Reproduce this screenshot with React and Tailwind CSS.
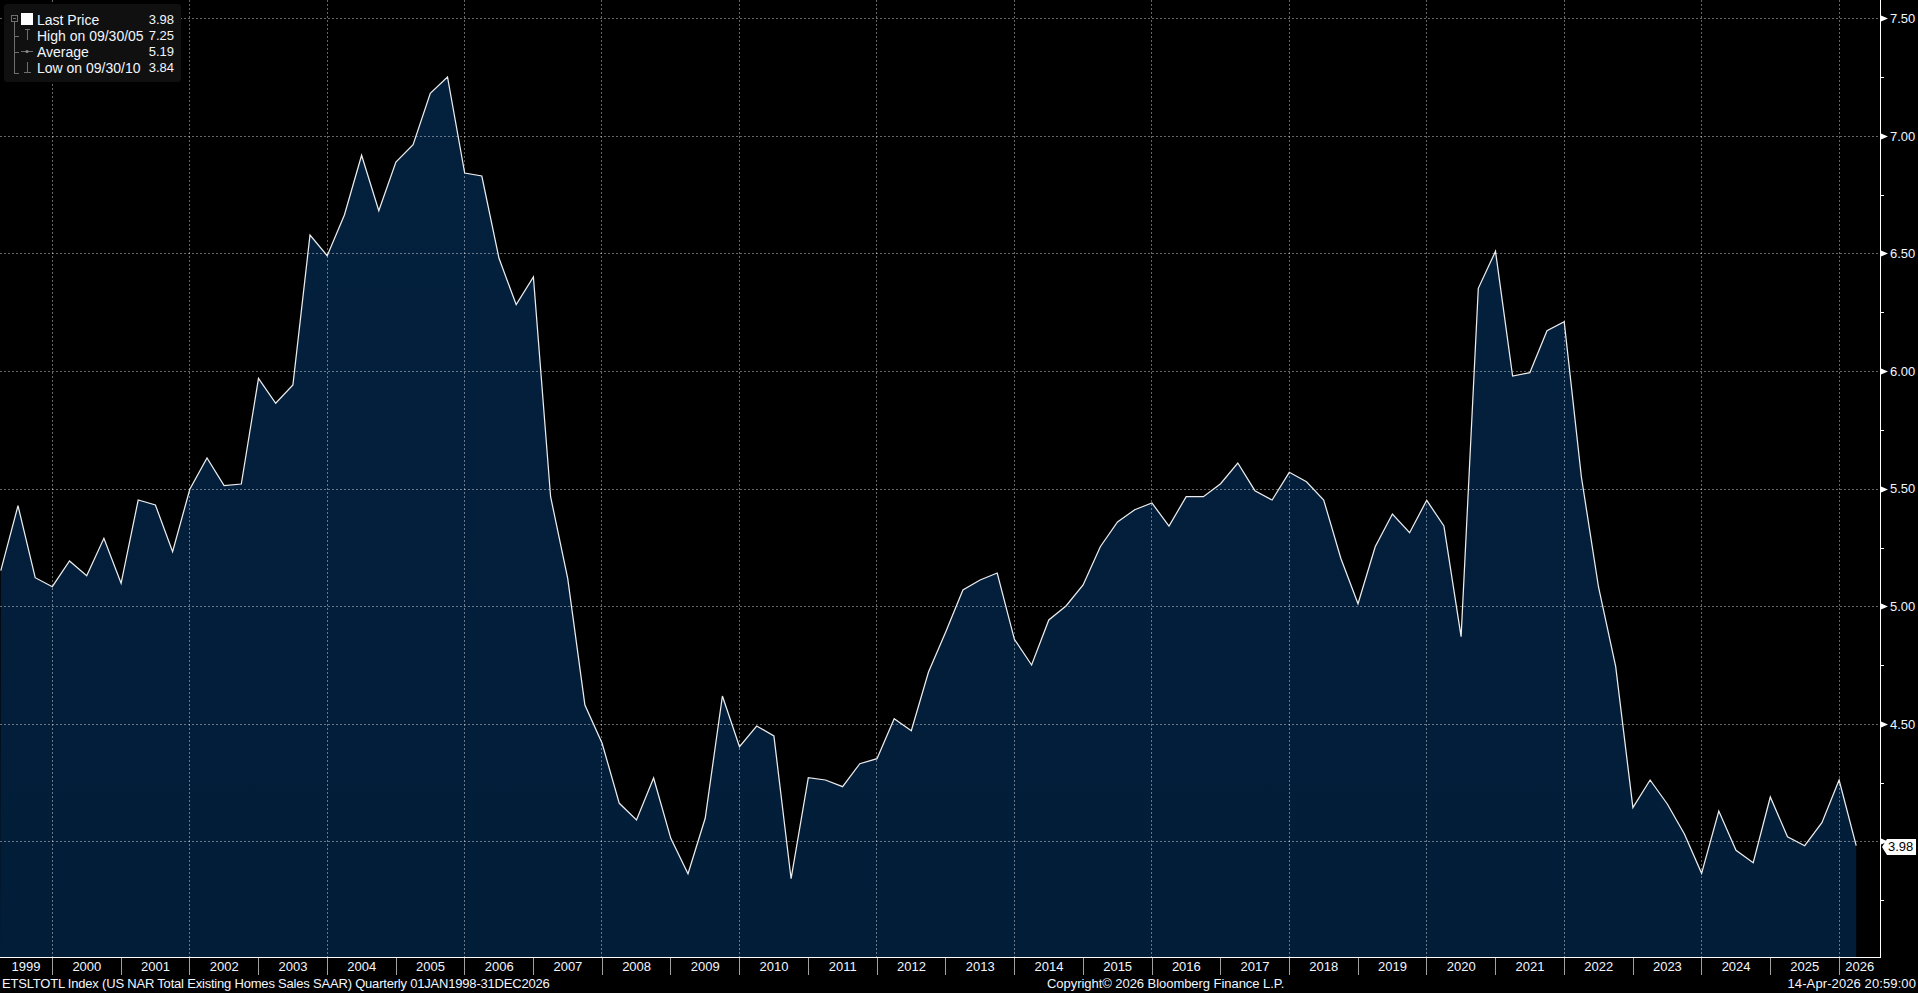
import React from "react";

const FONT = { fontFamily: '"Liberation Sans", Arial, sans-serif' };

// pixel y of each quarterly close, first point is at the left edge
const closes = [
  570.7, 505.7, 577.7, 586.7, 561, 575.7, 538.3, 583.3, 500, 505, 551.7, 489.3, 458, 485.7, 484,
  378.3, 403.3, 385, 235, 255.7, 215, 155.3, 210.7, 162, 144.7, 93.3, 77, 173, 176, 258.3, 304.7,
  277, 496.7, 578.3, 705, 743.3, 803.3, 820, 778, 838.3, 873.7, 818.3, 696, 746.7, 726, 736, 878.7,
  777.7, 780, 786.7, 763.7, 758.7, 718.7, 730.7, 672, 632, 590, 580, 573, 639.3, 665, 620, 606, 585,
  546.7, 522, 509.7, 503, 526, 496.7, 496.7, 483.7, 463, 490.7, 500, 472.3, 481.7, 500, 558.3,
  603.7, 546.7, 514, 532.7, 500.3, 526, 636.7, 288.3, 251.3, 376, 372.7, 330.7, 321.7, 477, 587,
  666.7, 807.7, 780, 804, 834, 873.3, 811, 850.3, 862.7, 797, 836.7, 845.7, 822.7, 780, 845.7,
];

const linePoints = closes.map((y, i) => `${(0.8 + 17.18 * i).toFixed(1)},${y}`).join(" ");
const lastX = (0.8 + 17.18 * (closes.length - 1)).toFixed(1);
const areaPoints = `0,957 ${linePoints} ${lastX},957`;

const gridY = [18.5, 136.5, 253.5, 371.5, 489.5, 606.5, 724.5, 841.5];
const gridX = [52.5, 189.5, 327.5, 464.5, 601.5, 739.5, 876.5, 1014.5, 1151.5, 1289.5, 1426.5, 1564.5, 1701.5, 1839.5];
const minorY = [77.5, 195.5, 312.5, 430.5, 548.5, 665.5, 783.5, 900.5];

const priceLabels = ["7.50", "7.00", "6.50", "6.00", "5.50", "5.00", "4.50"];

const years = [];
for (let y = 1999; y <= 2026; y++) years.push(y);

const legendRows = [
  { label: "Last Price", value: "3.98" },
  { label: "High on 09/30/05", value: "7.25" },
  { label: "Average", value: "5.19" },
  { label: "Low on 09/30/10", value: "3.84" },
];

const Legend = () => (
  <div className="absolute left-[4px] top-[4px] flex w-[177px] h-[78px] rounded-[3px] bg-[#101010] pt-[8px]">
    <svg width="33" height="64" className="shrink-0">
      <g stroke="#6e6e6e" fill="none" shapeRendering="crispEdges">
        <rect x="7.5" y="3.5" width="6" height="6" />
        <path d="M9 6.5h3M10.5 10v51h4M10.5 24.5h4M10.5 40.5h4" />
        <path d="M23.5 17v11M21 17.5h5M17 39.5h12M23.5 50v11M20 60.5h7" />
      </g>
      <rect x="17" y="1" width="12" height="12" fill="#fff" />
      <circle cx="23" cy="39.5" r="1.6" fill="#8a8a8a" />
    </svg>
    <div className="flex flex-col">
      {legendRows.map((row) => (
        <div key={row.label} className="flex w-[137px] h-[16px] items-center justify-between text-[14px] leading-[16px] text-[#f2f6ff]">
          <span>{row.label}</span>
          <span className="text-[13px]">{row.value}</span>
        </div>
      ))}
    </div>
  </div>
);

const PriceChart = () => (
  <svg width="1889" height="958" className="block shrink-0">
    <defs>
      <linearGradient id="areaFill" x1="0" y1="0" x2="0" y2="1">
        <stop offset="0" stopColor="#03203d" />
        <stop offset="1" stopColor="#021d38" />
      </linearGradient>
    </defs>
    <polygon points={areaPoints} fill="url(#areaFill)" />
    <g stroke="#fff" strokeOpacity="0.4" strokeDasharray="2 2" shapeRendering="crispEdges">
      {gridY.map((y) => (
        <line key={y} x1="0" x2="1880" y1={y} y2={y} />
      ))}
      {gridX.map((x) => (
        <line key={x} x1={x} x2={x} y1="0" y2="957" />
      ))}
    </g>
    <polyline points={linePoints} fill="none" stroke="#ececec" strokeWidth="1.25" strokeLinejoin="miter" />
    <g stroke="#fff" shapeRendering="crispEdges">
      <line x1="1880.5" x2="1880.5" y1="0" y2="958" />
      <line x1="0" x2="1881" y1="957.5" y2="957.5" />
      {minorY.map((y) => (
        <line key={y} x1="1881" x2="1884" y1={y} y2={y} />
      ))}
    </g>
    {gridY.map((y) => (
      <polygon key={y} points={`1881,${y - 3} 1888,${y} 1881,${y + 3}`} fill="#fff" />
    ))}
  </svg>
);

export default function App() {
  return (
    <div className="relative w-full h-screen overflow-hidden bg-black text-[#f2f6ff]" style={FONT}>
      <div className="flex h-[958px]">
        <PriceChart />
        <div className="flex flex-col ml-[1px] pt-[11px] text-[13px] leading-[16px]">
          {priceLabels.map((label) => (
            <div key={label} className="h-[117.6px]">
              {label}
            </div>
          ))}
        </div>
      </div>

      <div className="grid grid-cols-[52px_repeat(26,68.73px)_41px] h-[17px] text-[13px] leading-[17px] text-center">
        {years.map((year) => (
          <div key={year} className={year === 1999 ? "" : "border-l border-[#a0a0a0]"}>
            {year}
          </div>
        ))}
      </div>

      <div className="flex h-[18px] pl-[2px] pr-[2px] text-[13px] leading-[18px]">
        <span className="w-[1045px] tracking-[-0.2px]">ETSLTOTL Index (US NAR Total Existing Homes Sales SAAR) Quarterly 01JAN1998-31DEC2026</span>
        <span className="tracking-[-0.05px]">Copyright© 2026 Bloomberg Finance L.P.</span>
        <span className="ml-auto tracking-[0.1px]">14-Apr-2026 20:59:00</span>
      </div>

      <Legend />

      <div className="absolute left-[1882px] top-[839px] w-[34px] h-[16px] pl-[6px] bg-white text-black text-[13px] leading-[16px] [clip-path:polygon(5px_0,100%_0,100%_100%,5px_100%,0_50%)]">
        3.98
      </div>
    </div>
  );
}
